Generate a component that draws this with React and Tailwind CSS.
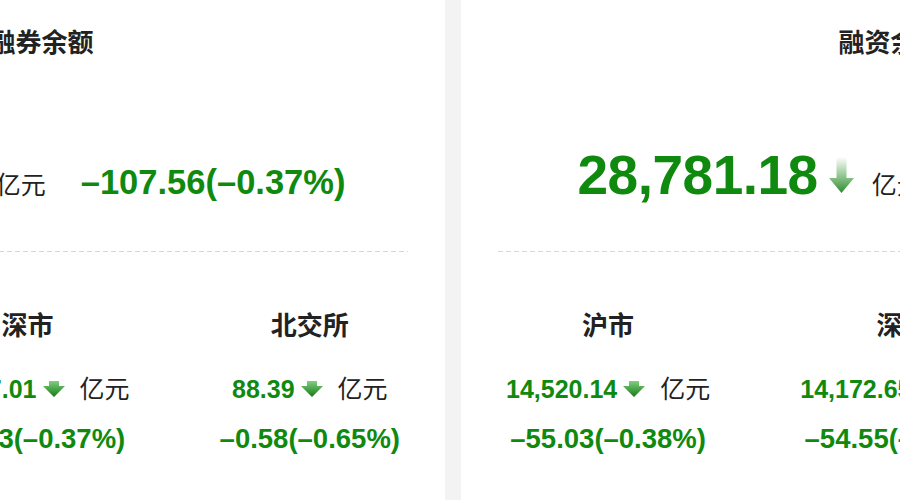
import { useId } from "react";

const cards = [
  {
    title: "融资融券余额",
    total: "29,070.95",
    change: "–107.56(–0.37%)",
    markets: [
      { name: "沪市", value: "14,745.55", change: "–54.05(–0.37%)" },
      { name: "深市", value: "14,237.01", change: "–52.93(–0.37%)" },
      { name: "北交所", value: "88.39", change: "–0.58(–0.65%)" },
    ],
  },
  {
    title: "融资余额",
    total: "28,781.18",
    change: "–110.12(–0.38%)",
    markets: [
      { name: "沪市", value: "14,520.14", change: "–55.03(–0.38%)" },
      { name: "深市", value: "14,172.65", change: "–54.55(–0.38%)" },
      { name: "北交所", value: "88.39", change: "–0.58(–0.65%)" },
    ],
  },
];

// tall faded arrow next to the headline balance
function BigDownArrow() {
  const id = useId();
  return (
    <svg width="25" height="36" viewBox="0 0 25 36" className="shrink-0">
      <defs>
        <linearGradient id={id} x1="0" y1="0" x2="0" y2="1">
          <stop offset="0" stopColor="#ffffff" />
          <stop offset="0.55" stopColor="#8cc48c" />
          <stop offset="1" stopColor="#2f8a2f" />
        </linearGradient>
      </defs>
      <path d="M7.5 0 H17.5 V21 H25 L12.5 36 L0 21 H7.5 Z" fill={`url(#${id})`} />
    </svg>
  );
}

// small solid arrow used in the market rows
function SmallDownArrow() {
  const id = useId();
  return (
    <svg width="22" height="16" viewBox="0 0 22 16" className="shrink-0">
      <defs>
        <linearGradient id={id} x1="0" y1="0" x2="0" y2="1">
          <stop offset="0" stopColor="#7fcf7f" />
          <stop offset="1" stopColor="#167a16" />
        </linearGradient>
      </defs>
      <path d="M6 0 H16 V5 H22 L11 16 L0 5 H6 Z" fill={`url(#${id})`} />
    </svg>
  );
}

function Market({ m }) {
  return (
    <div className="flex flex-col items-center">
      <div className="text-[26px] leading-[34px] font-bold text-[#222]">{m.name}</div>
      <div className="mt-[30px] flex items-baseline leading-[32px]">
        <span className="text-[25px] font-bold text-[#0f8a0f]">{m.value}</span>
        <span className="ml-[6px] self-center">
          <SmallDownArrow />
        </span>
        <span className="ml-[15px] text-[25px] text-[#222]">亿元</span>
      </div>
      <div className="mt-[17px] text-[27.5px] leading-[34px] font-bold text-[#0f8a0f]">
        {m.change}
      </div>
    </div>
  );
}

function Card({ card }) {
  return (
    <div className="w-[859px] h-[600px] shrink-0 bg-white px-[37px] pt-[26px]">
      <div className="text-center text-[26px] leading-[34px] font-bold text-[#222]">
        {card.title}
      </div>

      <div className="mt-[85px] flex h-[60px] items-baseline justify-center pl-4">
        <span className="text-[55px] leading-[60px] font-bold tracking-[-0.5px] text-[#0f8a0f]">
          {card.total}
        </span>
        <span className="ml-[11px] self-end mb-[12px]">
          <BigDownArrow />
        </span>
        <span className="ml-[18px] text-[25px] text-[#222]">亿元</span>
        <span className="ml-[35px] text-[34.5px] font-bold text-[#0f8a0f]">{card.change}</span>
      </div>

      {/* dashed divider, 5px dash / 3px gap */}
      <div className="mt-[46px] h-px bg-[linear-gradient(to_right,#d8d8d8_5px,transparent_5px)] bg-[length:8px_1px] bg-repeat-x" />

      <div className="mt-[57px] flex justify-between px-2">
        {card.markets.map((m) => (
          <Market key={m.name} m={m} />
        ))}
      </div>
    </div>
  );
}

export default function App() {
  return (
    <div className="h-[500px] w-full overflow-hidden bg-[#f3f3f3] font-['Liberation_Sans','Noto_Sans_CJK_SC',sans-serif]">
      <div className="ml-[-414px] flex gap-4">
        {cards.map((c) => (
          <Card key={c.title} card={c} />
        ))}
      </div>
    </div>
  );
}
